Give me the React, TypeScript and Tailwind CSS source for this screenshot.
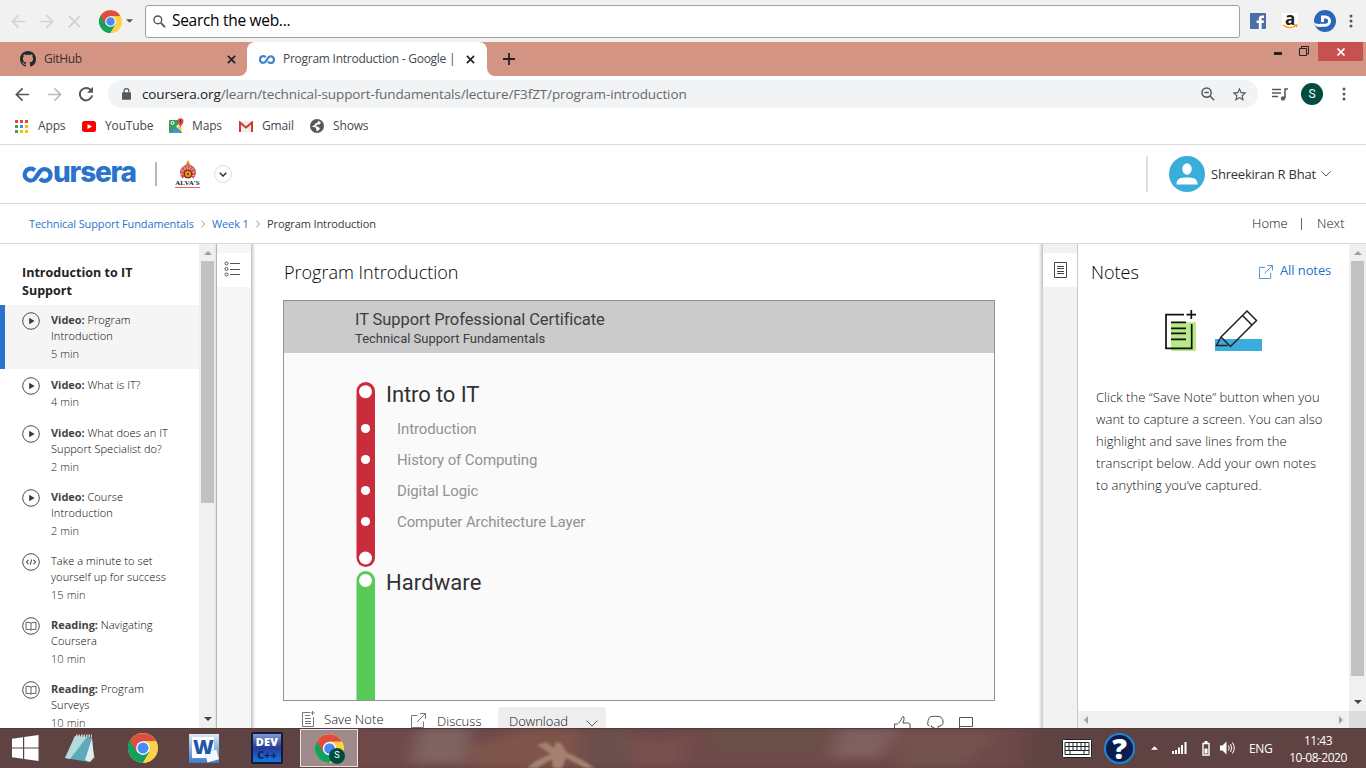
import React from "react";

const ui = "font-['Open_Sans','Noto_Sans',sans-serif]";

function ChromeLogo({ className }: { className: string }) {
  return (
    <svg viewBox="0 0 48 48" className={className}>
      <circle cx="24" cy="24" r="24" fill="#fdd24b" />
      <path d="M24 24 L3.2 12 A24 24 0 0 0 24 48 L34.4 30Z" fill="#14a05d" />
      <path d="M24 24 L24 13 H44.8 A24 24 0 0 0 3.2 12 L13.6 30Z" fill="#dd4d40" />
      <path d="M24 13H44.8A24 24 0 0 1 24 48L34.4 30Z" fill="#fdd24b" />
      <circle cx="24" cy="24" r="11" fill="#fff" />
      <circle cx="24" cy="24" r="8.8" fill="#4a8af4" />
    </svg>
  );
}

function Dots() {
  return (
    <svg viewBox="0 0 4 16" className="h-4 w-1 shrink-0">
      <g fill="#55585c">
        <circle cx="2" cy="3" r="1.5" />
        <circle cx="2" cy="8" r="1.5" />
        <circle cx="2" cy="13" r="1.5" />
      </g>
    </svg>
  );
}

function ArrowLeft({ className }: { className: string }) {
  return (
    <svg viewBox="0 0 16 16" className={className} fill="none" stroke="currentColor" strokeWidth="1.8">
      <path d="M15 8H2M8 1.5 1.5 8 8 14.5" />
    </svg>
  );
}

function TopToolbar() {
  return (
    <div className="flex h-[42px] items-center bg-[#f1f1f1] pl-[11px] pr-[13px]">
      <ArrowLeft className="h-[15px] w-[15px] text-[#d2d2d2]" />
      <ArrowLeft className="ml-[13px] h-[15px] w-[15px] rotate-180 text-[#d2d2d2]" />
      <svg viewBox="0 0 14 14" className="ml-[14px] h-[13px] w-[13px]" stroke="#d2d2d2" strokeWidth="1.8">
        <path d="M1 1 13 13M13 1 1 13" />
      </svg>
      <ChromeLogo className="ml-[18px] h-[23px] w-[23px]" />
      <svg viewBox="0 0 8 4" className="ml-[4px] h-1 w-[7px]">
        <path d="M0 0H8L4 4Z" fill="#555" />
      </svg>
      <div className="ml-[12px] flex h-[33px] w-[1095px] items-center rounded-[3px] border border-[#a0a0a0] bg-white pl-[7px]">
        <svg viewBox="0 0 14 14" className="h-[13px] w-[13px]" fill="none" stroke="#555" strokeWidth="1.5">
          <circle cx="5.2" cy="5.2" r="4.2" />
          <path d="M8.4 8.4 13 13" strokeWidth="2" />
        </svg>
        <span className="ml-[6px] whitespace-nowrap text-[15.5px] tracking-[-0.3px] text-black">Search the web...</span>
      </div>
      <svg viewBox="0 0 16 16" className="ml-[10px] h-4 w-4">
        <rect width="16" height="16" rx="1" fill="#4b6ea9" />
        <path d="M8.8 16V10H6.6V7.4H8.8V5.8C8.8 3.6 10 2.4 12.2 2.4H14V5H12.6C11.8 5 11.6 5.4 11.6 6V7.4H14L13.7 10H11.6V16Z" fill="#fff" />
      </svg>
      <div className="relative ml-4 h-4 w-4 bg-white">
        <span className="absolute left-[3px] top-[-4px] text-[17px] font-bold leading-[19px] text-[#222]">a</span>
        <svg viewBox="0 0 16 5" className="absolute bottom-0 left-0 h-[5px] w-4" fill="none" stroke="#f90" strokeWidth="1.2">
          <path d="M1 1Q7 6 14 1.5M12 .8H15L14.4 3.5" />
        </svg>
      </div>
      <svg viewBox="0 0 22 22" className="ml-4 h-[22px] w-[22px]">
        <circle cx="11" cy="11" r="11" fill="#2b66b9" />
        <path d="M8.5 12V7H11.5A4 4 0 0 1 11.5 15.2H6" fill="none" stroke="#fff" strokeWidth="3" />
        <path d="M0 12.5Q4 14.8 7 13.7V16.7Q4 17.5 1 15.5Z" fill="#fff" />
      </svg>
      <span className="ml-auto flex"><Dots /></span>
    </div>
  );
}

function TabClose() {
  return (
    <svg viewBox="0 0 10 10" className="h-[9px] w-[9px]" stroke="#222" strokeWidth="1.9">
      <path d="M1 1 9 9M9 1 1 9" />
    </svg>
  );
}

function TabStrip() {
  return (
    <div className="flex h-[34px] bg-[#d49484]">
      <div className="w-[247px] bg-white">
        <div className="flex h-full w-full items-center rounded-br-[8px] bg-[#d49484] pl-[20px] pr-[11px]">
          <svg viewBox="0 0 16 16" className="h-4 w-4" fill="#24292e">
            <path fillRule="evenodd" d="M8 0C3.58 0 0 3.58 0 8c0 3.54 2.29 6.53 5.47 7.59.4.07.55-.17.55-.38 0-.19-.01-.82-.01-1.49-2.01.37-2.53-.49-2.69-.94-.09-.23-.48-.94-.82-1.13-.28-.15-.68-.52-.01-.53.63-.01 1.08.58 1.23.82.72 1.21 1.87.87 2.33.66.07-.52.28-.87.51-1.07-1.78-.2-3.64-.89-3.64-3.95 0-.87.31-1.59.82-2.15-.08-.2-.36-1.02.08-2.12 0 0 .67-.21 2.2.82.64-.18 1.32-.27 2-.27s1.36.09 2 .27c1.53-1.04 2.2-.82 2.2-.82.44 1.1.16 1.92.08 2.12.51.56.82 1.27.82 2.15 0 3.07-1.87 3.75-3.65 3.95.29.25.54.73.54 1.48 0 1.07-.01 1.93-.01 2.2 0 .21.15.46.55.38A8.01 8.01 0 0 0 16 8c0-4.42-3.58-8-8-8z" />
          </svg>
          <span className="ml-[8px] text-[12px] tracking-[-0.3px] text-[#3a3030]">GitHub</span>
          <span className="ml-auto"><TabClose /></span>
        </div>
      </div>
      <div className="w-[240px] bg-[#d49484]">
        <div className="flex h-full items-center rounded-t-[8px] bg-white pl-[12px] pr-[12px]">
          <svg viewBox="0 0 16 9" className="h-[9px] w-4" fill="none" stroke="#4087cf" strokeWidth="2.3">
            <path d="M6.6 2.2A3.3 3.3 0 1 0 6.6 6.8L9.2 2.6A3.3 3.3 0 1 1 9 6.6" />
          </svg>
          <span className="ml-[8px] w-[172px] whitespace-nowrap text-[12px] tracking-[-0.26px] text-[#45494d]">Program Introduction - Google |</span>
          <span className="ml-auto"><TabClose /></span>
        </div>
      </div>
      <div className="flex-1 bg-white">
        <div className="flex h-full rounded-bl-[8px] bg-[#d49484]">
          <svg viewBox="0 0 12 12" className="ml-[16px] mt-[11px] h-3 w-3" stroke="#222" strokeWidth="1.8">
            <path d="M6 0V12M0 6H12" />
          </svg>
          <div className="ml-auto flex">
            <svg viewBox="0 0 36 20" className="mr-[8px] h-5 w-9" fill="none" stroke="#222">
              <path d="M0 11.5H8" strokeWidth="3" />
              <path d="M25.5 6.5H32.5V13.5H25.5ZM27.5 6V4.5H34.5V12H33" />
            </svg>
            <div className="mr-[3px] flex h-[19px] w-[45px] items-center justify-center bg-[#c75050]">
              <svg viewBox="0 0 8 8" className="h-2 w-2" stroke="#fff" strokeWidth="1.6">
                <path d="M.5 .5 7.5 7.5M7.5 .5 .5 7.5" />
              </svg>
            </div>
          </div>
        </div>
      </div>
    </div>
  );
}

function AddressBar() {
  return (
    <div className="flex h-[36px] items-center bg-white pl-[15px] pr-[20px]">
      <ArrowLeft className="h-[15px] w-[15px] text-[#55585c]" />
      <ArrowLeft className="ml-[17px] h-[15px] w-[15px] rotate-180 text-[#b9bbbd]" />
      <svg viewBox="0 0 16 16" className="ml-[16px] h-4 w-4" fill="none" stroke="#55585c" strokeWidth="2">
        <path d="M13.2 4.6A6.2 6.2 0 1 0 14.2 9.4" />
        <path d="M15 .8V6.8H9Z" fill="#55585c" stroke="none" />
      </svg>
      <div className="ml-[14px] flex h-7 w-[1150px] items-center rounded-full bg-[#f1f3f4] pl-[14px] pr-[10px]">
        <svg viewBox="0 0 10 13" className="h-3 w-[9px]">
          <rect y="4.5" width="10" height="8.5" rx="1" fill="#55585c" />
          <path d="M2.3 5V3.2a2.7 2.7 0 0 1 5.4 0V5" fill="none" stroke="#55585c" strokeWidth="1.3" />
        </svg>
        <span className="ml-[11px] whitespace-nowrap text-[13.5px] tracking-[-0.11px] text-[#65696d]">
          <span className="text-[#202124]">coursera.org</span>/learn/technical-support-fundamentals/lecture/F3fZT/program-introduction
        </span>
        <svg viewBox="0 0 14 14" className="ml-auto h-[14px] w-[14px]" fill="none" stroke="#55585c" strokeWidth="1.5">
          <circle cx="5.6" cy="5.6" r="4.6" />
          <path d="M9 9 13.2 13.2M3.4 5.6H7.8" />
        </svg>
        <svg viewBox="0 0 24 24" className="ml-[16px] h-[17px] w-[17px]" fill="#55585c">
          <path d="m22 9.24-7.19-.62L12 2 9.19 8.63 2 9.24l5.46 4.73L5.82 21 12 17.27 18.18 21l-1.63-7.03L22 9.24zM12 15.4l-3.76 2.27 1-4.28-3.32-2.88 4.38-.38L12 6.1l1.71 4.04 4.38.38-3.32 2.88 1 4.28L12 15.4z" />
        </svg>
      </div>
      <svg viewBox="0 0 16 13" className="ml-[14px] h-[13px] w-4" fill="none" stroke="#55585c" strokeWidth="1.6">
        <path d="M0 1.5H9M0 5H9M0 8.5H6M13 10V1H16" />
        <circle cx="11" cy="10.4" r="2.2" fill="#55585c" stroke="none" />
      </svg>
      <span className="ml-[13px] flex h-[22px] w-[22px] items-center justify-center rounded-full bg-[#004d40] font-[Roboto] text-[12px] text-white">S</span>
      <span className="ml-auto flex"><Dots /></span>
    </div>
  );
}

const appDots = ["#ea4335", "#ea4335", "#ea4335", "#34a853", "#4285f4", "#fbbc05", "#34a853", "#fbbc05", "#fbbc05"];

function Bookmarks() {
  return (
    <div className="flex h-[33px] items-center border-b border-[#d9dadc] bg-white pb-[4px] pl-[15px] text-[12px] tracking-[-0.15px] text-[#45494d]">
      <svg viewBox="0 0 13 13" className="h-[13px] w-[13px]">
        {appDots.map((c, i) => (
          <rect key={i} x={(i % 3) * 5} y={Math.floor(i / 3) * 5} width="3" height="3" fill={c} />
        ))}
      </svg>
      <span className="-mt-px ml-[10px] w-[44px]">Apps</span>
      <svg viewBox="0 0 14 11" className="h-[11px] w-[14px]">
        <rect width="14" height="11" rx="2.5" fill="#f00" />
        <path d="M5.5 3 10 5.5 5.5 8Z" fill="#fff" />
      </svg>
      <span className="-mt-px ml-[9px] w-[64px]">YouTube</span>
      <svg viewBox="0 0 15 15" className="-mt-[2px] h-[15px] w-[15px]">
        <rect y="2" width="13" height="13" rx="1" fill="#34a05a" />
        <path d="M0 15 13 3V14L7 8.5Z" fill="#fff" />
        <path d="M1.5 15 7 10 12 15Z" fill="#4a8af4" />
        <path d="M9 8.5 12.5 12" stroke="#fbc52c" strokeWidth="2" />
        <circle cx="3.5" cy="5" r="1.5" fill="none" stroke="#fff" />
        <path d="M11.5 10C11 7 8.5 6 8.5 3.2A3 3 0 0 1 14.5 3.2C14.5 6 12 7 11.5 10Z" fill="#dd4b3e" />
        <circle cx="11.5" cy="3.2" r="1" fill="#7b231c" />
      </svg>
      <span className="-mt-px ml-[8px] w-[47px]">Maps</span>
      <svg viewBox="0 0 14 11" className="h-[11px] w-[14px]">
        <rect width="14" height="11" rx="1" fill="#eee" />
        <path d="M1 11V1.5L7 6.5 13 1.5V11" fill="none" stroke="#d2392d" strokeWidth="2" />
      </svg>
      <span className="-mt-px ml-[9px] w-[48px]">Gmail</span>
      <svg viewBox="0 0 14 14" className="h-[14px] w-[14px]">
        <circle cx="7" cy="7" r="7" fill="#55585c" />
        <path d="M1.5 7.5 5 8.2Q6.5 8.5 6 10L7 12.5 9.5 10.5Q10.5 9 9 8.5L7.5 7.5 5.5 7 7.5 5.5 9.5 5.5 11 3.5 8.5 1.7 7.5 3.5 5.5 4.5 4 6.5Z" fill="#fff" />
      </svg>
      <span className="-mt-px ml-[9px]">Shows</span>
    </div>
  );
}

function SiteHeader() {
  return (
    <div className="flex h-[59px] items-center border-b border-[#dcdcdc] bg-white pl-[22px] pr-[35px]">
      <svg viewBox="0 0 32 17" className="h-[17px] w-8 shrink-0" fill="none" stroke="#2a73cc" strokeWidth="4.3">
        <path d="M12.8 4.4A5.9 5.9 0 1 0 12.6 13L18.5 4.7A5.9 5.9 0 1 1 18 12.6" />
      </svg>
      <span className="-ml-px -mt-[5px] w-[84px] font-[Inter] text-[28px] font-extrabold leading-[30px] tracking-[-1.2px] text-[#2a73cc]">ursera</span>
      <div className="ml-[18px] h-[24px] w-[2px] bg-[#b9b9b9]" />
      <div className="ml-[17px] flex w-[27px] flex-col items-center">
        <svg viewBox="0 0 20 20" className="h-5 w-5">
          <path d="M10 0 13 6H7Z" fill="#f08a24" />
          <path d="M4.5 18.5A8 8 0 1 1 15.5 18.5L10 14Z" fill="#cf5a50" />
          <path d="M10 14 2 14M10 14 3 9.5M10 14 5.5 6.5M10 14 9 5.5M10 14 12.5 6M10 14 15.5 8M10 14 17.5 11.5M10 14 17.5 16" stroke="#fff" strokeWidth=".5" />
          <circle cx="10" cy="14" r="4.5" fill="#8d2c23" />
          <circle cx="10" cy="14" r="3" fill="#f09a25" />
          <circle cx="10" cy="14" r="1.3" fill="#a63c20" />
        </svg>
        <span className="border-b border-[#d66] font-['Liberation_Serif'] text-[7px] font-bold leading-[7px] tracking-[0.1px] text-[#222]">ALVA'S</span>
      </div>
      <div className="ml-[13px] flex h-[18px] w-[18px] items-center justify-center rounded-full border border-[#ddd]">
        <svg viewBox="0 0 8 5" className="h-[5px] w-2" fill="none" stroke="#333" strokeWidth="1.5"><path d="M.7 .7 4 4 7.3 .7" /></svg>
      </div>
      <div className="ml-auto h-9 w-[2px] bg-[#dedede]" />
      <svg viewBox="0 0 36 36" className="ml-[21px] h-9 w-9">
        <circle cx="18" cy="18" r="18" fill="#3badda" />
        <ellipse cx="18" cy="13" rx="4.7" ry="5.7" fill="#fff" />
        <path d="M7.5 28.5C7.5 22 12 21.5 18 21.5S28.5 22 28.5 28.5Z" fill="#fff" />
      </svg>
      <span className="ml-[6px] mt-px w-[106px] whitespace-nowrap text-[13px] tracking-[-0.22px] text-[#333]">Shreekiran R Bhat</span>
      <svg viewBox="0 0 10 6" className="ml-[4px] h-[6px] w-[10px]" fill="none" stroke="#555"><path d="M.5 .5 5 5 9.5 .5" /></svg>
    </div>
  );
}

function Sep() {
  return (
    <svg viewBox="0 0 4 8" className="mx-[7px] h-2 w-1" fill="none" stroke="#999"><path d="M.5 .5 3.5 4 .5 7.5" /></svg>
  );
}

function Breadcrumb() {
  return (
    <div className="flex h-[40px] items-center border-b border-[#d9d9d9] bg-white pl-[29px] pr-[20px] text-[11px] tracking-[-0.11px] text-[#2a73cc]">
      <span className="mt-px w-[165px] whitespace-nowrap">Technical Support Fundamentals</span>
      <Sep />
      <span className="mt-px w-[37px] whitespace-nowrap">Week 1</span>
      <Sep />
      <span className="mt-px text-[#373a3c]">Program Introduction</span>
      <div className="ml-auto flex items-center text-[13px] font-light tracking-[0.05px] text-[#111]">
        <span className="w-[36px]">Home</span>
        <span className="ml-[13px] mr-[15px] h-3 w-px bg-[#666]" />
        <span className="w-[29px]">Next</span>
      </div>
    </div>
  );
}

type Kind = "video" | "code" | "book";
interface Item { kind: Kind; label?: string; text: string[]; time: string; height: string; active?: boolean }

const items: Item[] = [
  { kind: "video", label: "Video:", text: ["Program", "Introduction"], time: "5 min", height: "h-[64px] mb-px", active: true },
  { kind: "video", label: "Video:", text: ["What is IT?"], time: "4 min", height: "h-[48px]" },
  { kind: "video", label: "Video:", text: ["What does an IT", "Support Specialist do?"], time: "2 min", height: "h-[64px]" },
  { kind: "video", label: "Video:", text: ["Course", "Introduction"], time: "2 min", height: "h-[64px]" },
  { kind: "code", text: ["Take a minute to set", "yourself up for success"], time: "15 min", height: "h-[64px]" },
  { kind: "book", label: "Reading:", text: ["Navigating", "Coursera"], time: "10 min", height: "h-[64px]" },
  { kind: "book", label: "Reading:", text: ["Program", "Surveys"], time: "10 min", height: "h-[64px]" },
];

function ItemIcon({ kind }: { kind: Kind }) {
  return (
    <svg viewBox="0 0 18 18" className="mt-[7px] h-[18px] w-[18px] shrink-0" fill="none" stroke="#4a4d55">
      <circle cx="9" cy="9" r="8.3" />
      {kind === "video" && <path d="M7.2 5.8V12.2L12.6 9Z" fill="#373a3c" stroke="none" />}
      {kind === "code" && <path d="M6.5 6.8 4.5 9 6.5 11.2M11.5 6.8 13.5 9 11.5 11.2M9.8 6.3 8.2 11.7" strokeWidth="1.1" />}
      {kind === "book" && <path d="M9 6.2Q7 4.8 4 5.5V12.5Q7 12 9 13Q11 12 14 12.5V5.5Q11 4.8 9 6.2ZM9 6.2V13" strokeWidth=".9" />}
    </svg>
  );
}

function Triangle({ className }: { className: string }) {
  return <svg viewBox="0 0 8 4" className={className} fill="currentColor"><path d="M4 0 8 4H0Z" /></svg>;
}

function LessonSidebar() {
  return (
    <div className="flex h-full w-[217px] border-r border-[#c8c8c8] bg-white">
      <div className="w-[199px] overflow-hidden">
        <h2 className="h-[61px] pl-[22px] pt-[20px] text-[12.5px] font-bold leading-[18px] tracking-[0.03px] text-[#222]">Introduction to IT<br />Support</h2>
        {items.map((it, i) => (
          <div key={i} className={`flex ${it.height} pl-[22px] ${it.active ? "bg-[#f5f5f5] shadow-[inset_5px_0_0_#2a73cc]" : ""}`}>
            <ItemIcon kind={it.kind} />
            <div className="ml-[11px] mt-[7px] whitespace-nowrap text-[11px] font-light leading-4 tracking-[0.07px] text-black">
              <div>{it.label && <b className="font-bold tracking-[-0.05px] text-[#444]">{it.label} </b>}{it.text[0]}</div>
              {it.text[1] && <div>{it.text[1]}</div>}
              <div className={`${it.text[1] ? "mt-[2px]" : "mt-px"} text-[#222]`}>{it.time}</div>
            </div>
          </div>
        ))}
      </div>
      <div className="flex w-[17px] flex-col items-center bg-[#f0f0f0]">
        <Triangle className="mt-[7px] h-1 w-2 text-[#a0a0a0]" />
        <div className="mt-[6px] h-[242px] w-[13px] bg-[#c1c1c1]" />
        <Triangle className="mb-[7px] mt-auto h-1 w-2 rotate-180 text-[#444]" />
      </div>
    </div>
  );
}

const topics = ["Introduction", "History of Computing", "Digital Logic", "Computer Architecture Layer"];

function Slide() {
  return (
    <div className="h-[401px] w-[712px] overflow-hidden border border-[#929292] bg-[#fafafa]">
      <div className="h-[52px] bg-[#cbcbcc] pl-[71px] pt-[8px] font-[Roboto] text-[#3c3d40]">
        <div className="text-[16.5px] leading-[21px] tracking-[-0.09px]">IT Support Professional Certificate</div>
        <div className="text-[13px] leading-[17px]">Technical Support Fundamentals</div>
      </div>
      <div className="flex pl-[72px] pt-[29px]">
        <svg viewBox="0 0 20 320" className="h-[320px] w-5">
          <rect x=".5" width="18.5" height="185" rx="9.25" fill="#c92c3a" />
          <circle cx="9.5" cy="9.7" r="6.5" fill="#fff" />
          <circle cx="9.5" cy="46.5" r="4.6" fill="#fff" />
          <circle cx="9.5" cy="77.5" r="4.6" fill="#fff" />
          <circle cx="9.5" cy="108.5" r="4.6" fill="#fff" />
          <circle cx="9.5" cy="139.500" r="4.6" fill="#fff" />
          <circle cx="9.5" cy="176" r="6.5" fill="#fff" />
          <rect x=".5" y="189" width="18.5" height="150" rx="9.25" fill="#58ca58" />
          <circle cx="9.5" cy="198.5" r="6.5" fill="#fff" />
        </svg>
        <div className="ml-[10px] whitespace-nowrap font-[Roboto]">
          <div className="h-[32px] text-[22px] leading-[26px] tracking-[-0.1px] text-[#303134]">Intro to IT</div>
          {topics.map((t) => (
            <div key={t} className="ml-[11px] h-[31px] text-[15px] leading-[30px] tracking-[-0.1px] text-[#919293]">{t}</div>
          ))}
          <div className="mt-[31px] text-[22px] leading-[28px] tracking-[0.08px] text-[#303134]">Hardware</div>
        </div>
      </div>
    </div>
  );
}

function External({ className }: { className: string }) {
  return (
    <svg viewBox="0 0 15 15" className={className} fill="none" stroke="currentColor">
      <path d="M6.5 2.5H.5V14.5H12.5V8.5M9 .5H14.5V6M14.5 .5 6 9" />
    </svg>
  );
}

function VideoActions() {
  return (
    <div className="flex h-[28px] items-start overflow-hidden pl-[19px] pr-[22px] text-[13px] font-light text-[#111]">
      <svg viewBox="0 0 13 17" className="mt-[10px] h-[17px] w-[13px]" fill="none" stroke="#777">
        <path d="M8 1.5H.5V15.5H11.5V6M10.5 0V4M8.5 2H12.5M3 4.5H8M3 7.5H9M3 10.5H9M3 12.5H9" />
      </svg>
      <span className="ml-[9px] mt-[9px] w-[62px] whitespace-nowrap leading-[18px] tracking-[0.07px]">Save Note</span>
      <External className="ml-[25px] mt-[12px] h-[15px] w-[15px] text-[#777]" />
      <span className="ml-[11px] mt-[11px] w-[46px] leading-[18px] tracking-[0.05px]">Discuss</span>
      <div className="ml-[15px] mt-[6px] flex h-[36px] w-[108px] rounded-[2px] bg-[#eeeeee] pl-[11px]">
        <span className="mt-[5px] w-[60px] leading-[18px]">Download</span>
        <svg viewBox="0 0 12 7" className="ml-[17px] mt-[13px] h-[7px] w-3" fill="none" stroke="#666"><path d="M.5 .5 6 6 11.5 .5" /></svg>
      </div>
      <div className="ml-auto mt-[14px] flex">
        <svg viewBox="0 0 17 17" className="h-[17px] w-[17px]" fill="none" stroke="#555">
          <path d="M.5 17V9H3.5C5 8 7 5.5 8 2.5Q9 1 10 2Q10.5 4.5 9 8H14.5Q17 8.5 16 11V17" />
        </svg>
        <svg viewBox="0 0 17 17" className="ml-[16px] h-[17px] w-[17px]" fill="none" stroke="#555">
          <path d="M2.5 11Q0 10.500 .8 8Q1 2.5 4 1.5Q9 .8 13.5 1.8Q16.5 4 16.2 8Q15 11.500 11 11.500V16H7.5L7 12.5L4.5 12V10.500" />
        </svg>
        <svg viewBox="0 0 14 16" className="ml-[15px] h-4 w-[14px]" fill="none" stroke="#555"><path d="M.5 16V2.5H13.5V11.5H.5" /></svg>
      </div>
    </div>
  );
}

function Lecture() {
  return (
    <div className="flex h-full flex-1">
      <div className="z-10 w-[34px] bg-[#f6f6f6] pt-[9px] shadow-[1px_0_3px_1px_rgba(0,0,0,0.25)]">
        <div className="flex h-[34px] items-center justify-center bg-white pr-[4px]">
          <svg viewBox="0 0 16 16" className="-mt-[2px] h-4 w-4" fill="none" stroke="#555">
            <circle cx="2.5" cy="2.5" r="1.5" /><circle cx="2.5" cy="8" r="1.5" /><circle cx="2.5" cy="13.5" r="1.5" />
            <path d="M6 2.5H16M6 8.5H16M6 13.5H16" />
          </svg>
        </div>
      </div>
      <div className="w-[792px] overflow-hidden bg-white pl-8 pr-[48px] pt-[14px]">
        <h1 className="mb-[14px] ml-px whitespace-nowrap text-[18px] font-light leading-[28px] text-black">Program Introduction</h1>
        <Slide />
        <VideoActions />
      </div>
      <div className="z-10 w-[34px] bg-[#f2f2f2] pt-[9px] shadow-[-1px_0_3px_1px_rgba(0,0,0,0.25)]">
        <div className="flex h-[34px] items-center justify-center bg-white">
          <svg viewBox="0 0 13 16" className="h-4 w-[13px]" fill="none" stroke="#444">
            <path d="M.5 .5H12.5V15.5H.5ZM3 4.5H10M3 6.5H10M3 9.5H10M3 11.5H10" />
          </svg>
        </div>
      </div>
    </div>
  );
}

const noteLines = [
  "Click the “Save Note” button when you",
  "want to capture a screen. You can also",
  "highlight and save lines from the",
  "transcript below. Add your own notes",
  "to anything you’ve captured.",
];

function Notes() {
  return (
    <div className="z-20 flex h-full w-[289px] flex-col border-l border-[#c8c8c8] bg-white">
      <div className="flex h-[467px]">
        <div className="w-[271px]">
          <div className="flex items-center pl-[13px] pr-[18px] pt-[13px]">
            <span className="text-[18px] font-light leading-[30px] text-black">Notes</span>
            <External className="ml-auto h-[14px] w-[14px] text-[#4a8ad4]" />
            <span className="-mt-[3px] ml-[7px] w-[51px] whitespace-nowrap text-[13px] tracking-[-0.1px] text-[#2a73cc]">All notes</span>
          </div>
          <div className="flex pl-[87px] pt-[23px]">
            <svg viewBox="0 0 32 42" className="h-[42px] w-8">
              <path d="M6 12H31V41H6Z" fill="#b8e986" />
              <path d="M19 4.7H1V38.3H26.7V14M6 12.3H21M6 18.3H21M6 23.3H21M6 29.3H21M26.3 0V9M21.5 4.7H31" fill="none" stroke="#111" strokeWidth="1.7" />
            </svg>
            <svg viewBox="0 0 47 42" className="ml-[18px] h-[42px] w-[47px]">
              <path d="M0 29H47V41H0Z" fill="#3badda" />
              <path d="M6 27 32 1 41.5 10.5 15.5 36.5ZM6 27 1.5 35.5H12.5M6 27 13 34M27.500 5.5 37 15" fill="none" stroke="#222" strokeWidth="1.5" />
            </svg>
          </div>
          <div className="whitespace-nowrap pl-[18px] pt-[34px] text-[13px] font-light leading-[22px] tracking-[0.05px] text-[#111]">
            {noteLines.map((l) => <div key={l}>{l}</div>)}
          </div>
        </div>
        <div className="flex w-[17px] flex-col items-center bg-[#f0f0f0]">
          <Triangle className="mt-[7px] h-1 w-2 text-[#a0a0a0]" />
          <div className="mt-[6px] h-[415px] w-[13px] bg-[#c1c1c1]" />
          <Triangle className="mb-[7px] mt-auto h-1 w-2 rotate-180 text-[#444]" />
        </div>
      </div>
      <div className="flex h-[17px] items-center bg-[#f0f0f0] pl-[4px]">
        <Triangle className="h-1 w-2 -rotate-90 text-[#a0a0a0]" />
        <Triangle className="ml-auto mr-[4px] h-1 w-2 rotate-90 text-[#a0a0a0]" />
        <span className="h-full w-[17px] bg-[#dcdcdc]" />
      </div>
    </div>
  );
}

function Taskbar() {
  return (
    <div className="relative h-[40px] overflow-hidden bg-[#5f4343]">
      <svg viewBox="0 0 1366 40" className="absolute inset-0 h-10 w-[1366px]">
        <defs>
          <filter id="soft"><feGaussianBlur stdDeviation="9 4" /></filter>
          <filter id="edge"><feGaussianBlur stdDeviation="0.8" /></filter>
        </defs>
        <g filter="url(#soft)">
          <rect x="345" width="680" height="40" fill="#704a49" />
          <path d="M420 0H470L465 35H410Z" fill="#806464" />
          <path d="M470 20 530 0H580V40H470Z" fill="#7f554b" />
          <path d="M590 0H630L640 40H590Z" fill="#6a504b" />
          <path d="M625 10 665 15 690 5 680 40H635Z" fill="#7c5050" />
          <path d="M700 0H830V25H720Z" fill="#6a5049" />
          <path d="M840 0H900L880 30H830Z" fill="#80605f" />
          <path d="M900 5H1000L960 40H900Z" fill="#75534f" />
        </g>
        <g filter="url(#edge)" fill="#a48170">
          <path d="M537 17 546 14 554 20 556 14 561 15 566 24Q580 30 595 40H585L566 30 562 40H553L552 31 537 40H527Q535 32 551 26Z" />
        </g>
        <path d="M0 .5H1366" stroke="#513b3b" />
      </svg>
      <div className="relative flex h-full items-center">
        <svg viewBox="0 0 27 26" className="ml-3 h-[26px] w-[27px]" fill="#fff">
          <path d="M0 3.8 11 2.2V12.4H0ZM12.2 2 26.5 0V12.4H12.2ZM0 13.6H11V23.8L0 22.2ZM12.2 13.6H26.5V26L12.2 24Z" />
        </svg>
        <svg viewBox="0 0 30 30" className="ml-[26px] h-[30px] w-[30px]">
          <path d="M24 3 30 25 25 29 20 27Z" fill="#8c7a48" />
          <path d="M10 3 27 5 24 29 0 25Z" fill="#5fa9b8" />
          <path d="M10 3 22 4 5 26 0 25Z" fill="#b4dade" />
          <path d="M20 27 27 5 29 24 25 29Z" fill="#dceef0" />
          <path d="M11 3H27" stroke="#d4d4d4" strokeWidth="3" strokeDasharray="1.5 1" />
        </svg>
        <ChromeLogo className="ml-[33px] h-[30px] w-[30px]" />
        <div className="relative ml-[31px] h-[29px] w-[30px] overflow-hidden bg-linear-to-b from-[#dce9f8] to-[#3b7bc8]">
          <div className="absolute left-[3px] top-[3px] h-[21px] w-[22px] bg-white" />
          <div className="absolute bottom-[2px] right-px h-[10px] w-[12px] rotate-[-15deg] bg-[#f4f8fd] shadow-[0_0_1px_#5a82bb]" />
          <span className="absolute left-[4px] top-[2px] text-[20px] font-extrabold leading-[22px] text-[#1d57a5]">W</span>
        </div>
        <div className="ml-[32px] flex h-[32px] w-[32px] flex-col items-center rounded-[2px] border-2 border-[#101c3c] bg-linear-to-b from-[#8696cc] via-[#233a9a] to-[#1479e0] font-['Noto_Sans'] font-black">
          <span className="mt-[2px] text-[11px] leading-[12px] tracking-[0.2px] text-white">DEV</span>
          <span className="text-[11px] leading-[13px] text-[#0b2a66]">C++</span>
        </div>
        <div className="relative ml-[17px] flex h-[38px] w-[58px] items-center justify-center border border-[#eee2e2] bg-[#9e8a8a]">
          <ChromeLogo className="h-[29px] w-[29px]" />
          <span className="absolute bottom-[2px] left-[28px] flex h-[16px] w-[16px] items-center justify-center rounded-full bg-[#004d40] font-[Roboto] text-[9px] text-white">S</span>
        </div>
        <div className="ml-auto flex items-center text-white">
          <svg viewBox="0 0 30 19" className="h-[19px] w-[30px]">
            <rect x=".5" y=".5" width="29" height="18" rx="1" fill="#fff" stroke="#222" />
            <path d="M3 3.5H27V15.5H3ZM3 7.5H27M3 11.5H27M7 3V11M11 3V11M15 3V11M19 3V11M23 3V11M8 11V15M22 11V15" fill="none" stroke="#222" strokeWidth="1" />
          </svg>
          <div className="ml-[12px] flex h-[31px] w-[31px] items-center justify-center rounded-full border-2 border-[#1e86d6] bg-[#0b1d50]">
            <span className="text-[29px] font-extrabold leading-[30px]">?</span>
          </div>
          <Triangle className="ml-[16px] h-1 w-[7px]" />
          <svg viewBox="0 0 15 12" className="ml-[14px] h-3 w-[15px]" fill="#fff">
            <path d="M0 9H2V12H0ZM3 8H5V12H3ZM6 5.5H8V12H6ZM9 3H11V12H9ZM12.5 0H14.5V12H12.5Z" />
          </svg>
          <svg viewBox="0 0 8 15" className="ml-[15px] h-[15px] w-2">
            <path d="M1 2.5H7V14H1Z" fill="none" stroke="#fff" strokeWidth="1.4" /><path d="M2.5 0H5.5V2H2.5ZM2.5 7.5H5.5V12.5H2.5Z" fill="#fff" />
          </svg>
          <svg viewBox="0 0 15 14" className="ml-[10px] h-[14px] w-[15px]" fill="none" stroke="#fff">
            <path d="M0 4.5H2.5L6.5 .5V13.5L2.5 9.5H0Z" fill="#fff" stroke="none" /><path d="M8.5 4.5Q10 7 8.5 9.5M10.5 3Q13 7 10.5 11M12.5 1.5Q16 7 12.5 12.5" />
          </svg>
          <span className="ml-[14px] mt-px w-[24px] text-[12px] tracking-[-0.4px]">ENG</span>
          <div className="ml-[15px] mr-[18px] mt-px w-[60px] whitespace-nowrap text-center text-[12px] leading-[17px] tracking-[-0.5px]">
            <div>11:43</div>
            <div>10-08-2020</div>
          </div>
        </div>
      </div>
    </div>
  );
}

export default function App() {
  return (
    <div className={`flex h-[768px] w-[1366px] flex-col overflow-hidden bg-white ${ui}`}>
      <TopToolbar />
      <TabStrip />
      <AddressBar />
      <Bookmarks />
      <SiteHeader />
      <Breadcrumb />
      <div className="flex h-[484px] overflow-hidden">
        <LessonSidebar />
        <Lecture />
        <Notes />
      </div>
      <Taskbar />
    </div>
  );
}
